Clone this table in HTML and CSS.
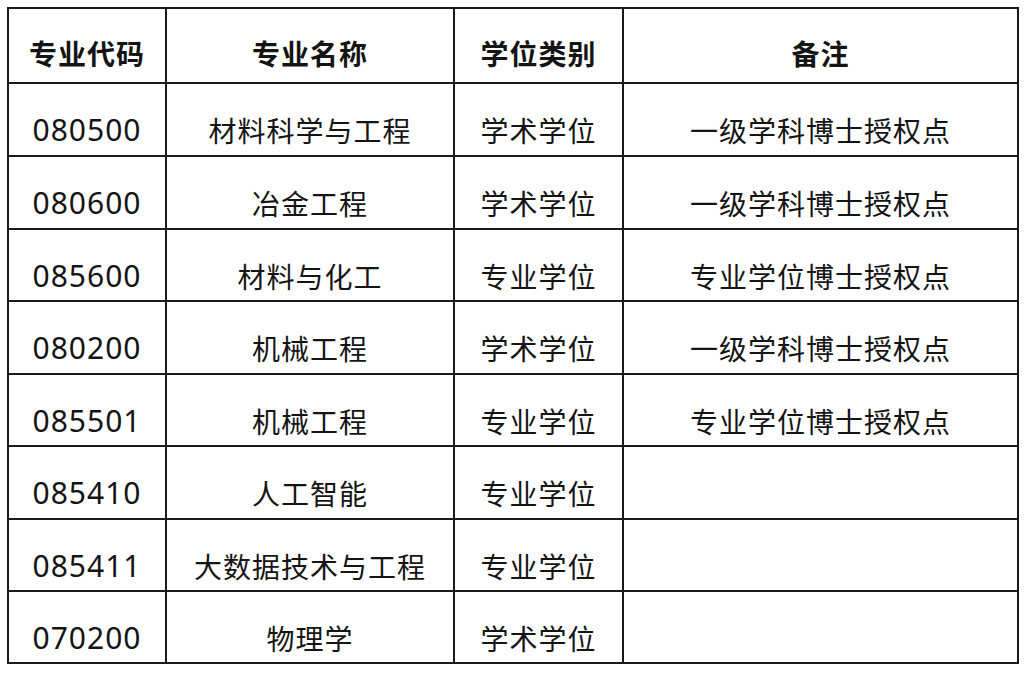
FILE: index.html
```html
<!DOCTYPE html>
<html lang="zh">
<head>
<meta charset="utf-8">
<link rel="stylesheet" href="styles.css">
</head>
<body>
<table class="grid">
  <colgroup>
    <col class="c1"><col class="c2"><col class="c3"><col class="c4">
  </colgroup>
  <thead>
    <tr class="head"><th>专业代码</th><th>专业名称</th><th>学位类别</th><th>备注</th></tr>
  </thead>
  <tbody>
    <tr class="r73"><td class="num">080500</td><td>材料科学与工程</td><td>学术学位</td><td>一级学科博士授权点</td></tr>
    <tr class="r73"><td class="num">080600</td><td>冶金工程</td><td>学术学位</td><td>一级学科博士授权点</td></tr>
    <tr class="r72"><td class="num">085600</td><td>材料与化工</td><td>专业学位</td><td>专业学位博士授权点</td></tr>
    <tr class="r73"><td class="num">080200</td><td>机械工程</td><td>学术学位</td><td>一级学科博士授权点</td></tr>
    <tr class="r72"><td class="num">085501</td><td>机械工程</td><td>专业学位</td><td>专业学位博士授权点</td></tr>
    <tr class="r73"><td class="num">085410</td><td>人工智能</td><td>专业学位</td><td></td></tr>
    <tr class="r72"><td class="num">085411</td><td>大数据技术与工程</td><td>专业学位</td><td></td></tr>
    <tr class="r72"><td class="num">070200</td><td>物理学</td><td>学术学位</td><td></td></tr>
  </tbody>
</table>
</body>
</html>
```

FILE: styles.css
```css
html, body {
  margin: 0;
  padding: 0;
  background: #ffffff;
}
body {
  padding: 7px 0 0 7px;
  font-family: "Noto Sans CJK SC", "Noto Sans", sans-serif;
  color: #141414;
}
.grid {
  border-collapse: collapse;
  table-layout: fixed;
  width: 1010px;
}
.c1 { width: 158px; }
.c2 { width: 288px; }
.c3 { width: 169px; }
.c4 { width: 395px; }
.grid th, .grid td {
  border: 2px solid #1a1a1a;
  text-align: center;
  vertical-align: top;
  padding: 0;
  font-size: 28px;
  line-height: 40px;
  letter-spacing: 1px;
  white-space: nowrap;
}
.grid th {
  font-weight: 700;
  padding-top: 24px;
}
.grid td {
  font-weight: 400;
  padding-top: 26px;
}
.grid td.num {
  font-family: "Noto Sans", "Noto Sans CJK SC", sans-serif;
  font-size: 30px;
  letter-spacing: 1px;
}
.head { height: 75px; }
.r73 { height: 73px; }
.r72 { height: 72px; }
```
